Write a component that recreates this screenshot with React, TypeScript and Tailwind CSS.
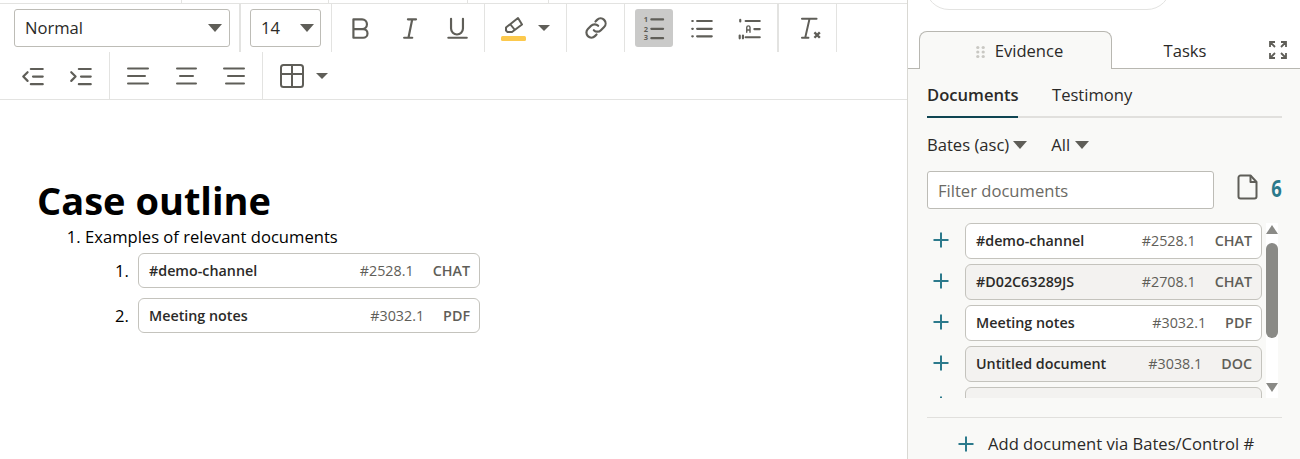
import { ReactNode } from "react";

const docs = [
  { name: "#demo-channel", bates: "#2528.1", kind: "CHAT" },
  { name: "#D02C63289JS", bates: "#2708.1", kind: "CHAT" },
  { name: "Meeting notes", bates: "#3032.1", kind: "PDF" },
  { name: "Untitled document", bates: "#3038.1", kind: "DOC" },
  { name: "", bates: "", kind: "" },
];

function Icon({ children, size = 26, className = "" }: { children: ReactNode; size?: number; className?: string }) {
  return (
    <svg
      width={size}
      height={size}
      viewBox="0 0 24 24"
      fill="none"
      stroke="#5f5e58"
      strokeWidth="2"
      strokeLinecap="round"
      strokeLinejoin="round"
      className={className}
    >
      {children}
    </svg>
  );
}

function Caret({ className = "" }: { className?: string }) {
  return <span className={`inline-block w-0 h-0 border-x-[7px] border-x-transparent border-t-[8px] border-t-[#5f5e58] ${className}`} />;
}

function SmallCaret() {
  return <span className="inline-block w-0 h-0 border-x-[6px] border-x-transparent border-t-[6px] border-t-[#5f5e58]" />;
}

function ToolBtn({ children, active }: { children: ReactNode; active?: boolean }) {
  return (
    <div className="w-[48px] h-[47px] flex items-center justify-center">
      <div className={`w-[38px] h-[38px] rounded-[3px] flex items-center justify-center ${active ? "bg-[#cacac9]" : ""}`}>{children}</div>
    </div>
  );
}

function Group({ children, className = "" }: { children: ReactNode; className?: string }) {
  return <div className={`flex items-center border-r border-[#e3e3e1] h-full ${className}`}>{children}</div>;
}

function DocCard({ name, bates, kind, shaded, height = "h-[36px]" }: { name: string; bates: string; kind: string; shaded?: boolean; height?: string }) {
  return (
    <div className={`flex items-center shrink-0 rounded-[6px] border border-[#c4c3bd] pl-[10px] pr-[9px] text-[14.3px] ${height} ${shaded ? "bg-[#f3f2f0]" : "bg-white"}`}>
      <span className="font-semibold text-[#2b2a28] flex-1">{name}</span>
      <span className="text-[#5f5e58] mr-[19px]">{bates}</span>
      <span className="font-semibold text-[#5f5e58]">{kind}</span>
    </div>
  );
}

function Toolbar() {
  return (
    <div className="border-b border-[#e3e3e1] h-[96px] shrink-0">
      <div className="flex h-[48px]">
        <Group className="w-[241px] pl-[14px] border-r-2">
          <div className="w-[216px] h-[38px] rounded-[3px] border border-[#bdbcb6] flex items-center justify-between pl-[10px] pr-[7px] text-[16.6px] text-[#2b2a28]">
            Normal
            <Caret />
          </div>
        </Group>
        <Group className="w-[91px] pl-[9px]">
          <div className="w-[71px] h-[38px] rounded-[3px] border border-[#bdbcb6] flex items-center justify-between pl-[10px] pr-[6px] text-[16.6px] text-[#2b2a28]">
            14
            <Caret />
          </div>
        </Group>
        <Group className="w-[153px] pl-[5px]">
          <ToolBtn>
            <Icon><path d="M5 4h8a4.500 4.500 0 0 1 0 9H5zM5 13h9a4 4 0 0 1 0 8H5z" /></Icon>
          </ToolBtn>
          <ToolBtn>
            <Icon><path d="M11 4h7.500M7.500 21H15M15 4l-3.500 17" /></Icon>
          </ToolBtn>
          <ToolBtn>
            <Icon><path d="M6.500 3.500v9a5.500 5.500 0 0 0 11 0v-9M4 21h17" /></Icon>
          </ToolBtn>
        </Group>
        <Group className="w-[82px] pl-[5px]">
          <ToolBtn>
            <svg width="26" height="26" viewBox="0 0 26 26" fill="none" stroke="#5f5e58" strokeWidth="2" strokeLinejoin="round">
              <path d="M5 12.500L17 3l4 6.500-10 7.500H6.500L5 15.500z" />
              <path d="M9.500 9.500l4 5" />
              <rect x="0" y="21" width="25" height="5" rx="1.500" fill="#fcc94d" stroke="none" />
            </svg>
          </ToolBtn>
          <SmallCaret />
        </Group>
        <Group className="w-[58px] pl-[5px]">
          <ToolBtn>
            <Icon>
              <path d="M10 14a4.500 4.500 0 0 0 6.500 0l3-3a4.500 4.500 0 0 0-6.500-6.500l-1.500 1.500" />
              <path d="M14 10a4.500 4.500 0 0 0-6.500 0l-3 3a4.500 4.500 0 0 0 6.500 6.500l1.500-1.500" />
            </Icon>
          </ToolBtn>
        </Group>
        <Group className="w-[154px] pl-[5px] border-r-2">
          <ToolBtn active>
            <svg width="26" height="30" viewBox="0 -2 24 28" fill="none" stroke="#5f5e58" strokeWidth="2" strokeLinecap="round">
              <path d="M9.500 4h11M9.500 12.800h11M9.500 21.500h11" />
              <g fill="#5f5e58" stroke="none" fontSize="7" fontWeight="700" textAnchor="middle">
                <text x="4.500" y="6.500">1</text>
                <text x="4.500" y="15.300">2</text>
                <text x="4.500" y="23.500">3</text>
              </g>
            </svg>
          </ToolBtn>
          <ToolBtn>
            <Icon>
              <path d="M7.500 5.500h13.500M7.500 12.800h13.500M7.500 19.700h13.500M3 5.500h.5M3 12.800h.5M3 19.700h.5" />
            </Icon>
          </ToolBtn>
          <ToolBtn>
            <Icon>
              <path d="M8 5.500h13M16 13h5M8 20.500h13M3 4.500v1.500M2.500 19v2.500M5.500 19v2.500" />
              <path d="M9 16v-4.500a1.500 1.500 0 0 1 3 0V16M9 13.800h3" strokeWidth="1.300" />
            </Icon>
          </ToolBtn>
        </Group>
        <Group className="w-[58px] pl-[6px]">
          <ToolBtn>
            <Icon>
              <path d="M5.500 3.500h13.500M12.500 3.500l-4 17.500M5.500 21h6" strokeWidth="1.800" />
              <path d="M17 16l5 5M22 16l-5 5" strokeWidth="2.200" strokeLinecap="butt" />
            </Icon>
          </ToolBtn>
        </Group>
      </div>
      <div className="flex h-[48px]">
        <Group className="w-[110px] pl-[9px]">
          <ToolBtn>
            <Icon><path d="M7 8.500L3 12.500l4 4M10 5.500h11M12 12.500h9M10 19.500h11" /></Icon>
          </ToolBtn>
          <ToolBtn>
            <Icon><path d="M3 8.500l4 4-4 4M10 5.500h11M12 12.500h9M10 19.500h11" /></Icon>
          </ToolBtn>
        </Group>
        <Group className="w-[153px] pl-[4px]">
          <ToolBtn>
            <Icon size={24}><path d="M2 4.500h20M2 12h17M2 19.500h20" /></Icon>
          </ToolBtn>
          <ToolBtn>
            <Icon size={24}><path d="M3 4.500h19M6 12h13M3 19.500h19" /></Icon>
          </ToolBtn>
          <ToolBtn>
            <Icon size={24}><path d="M2 4.500h20M6 12h16M4 19.500h18" /></Icon>
          </ToolBtn>
        </Group>
        <div className="flex items-center pl-[5px]">
          <ToolBtn>
            <svg width="26" height="26" viewBox="0 0 26 26" fill="none" stroke="#5f5e58" strokeWidth="2" strokeLinejoin="round">
              <rect x="2" y="2" width="22" height="22" rx="2.500" />
              <path d="M2 11h22M13 2v22" />
            </svg>
          </ToolBtn>
          <SmallCaret />
        </div>
      </div>
    </div>
  );
}

function Editor() {
  return (
    <div className="flex-1 min-w-0 flex flex-col bg-white">
      <div className="h-[4px] border-b border-[#e3e3e1] shrink-0 flex">
        <div className="w-[182px] h-full border-r border-[#e3e3e1]" />
        <div className="w-[147px] h-full border-r border-[#e3e3e1]" />
        <div className="w-[139px] h-full border-r border-[#e3e3e1]" />
        <div className="w-[81px] h-full border-r border-[#e3e3e1]" />
      </div>
      <Toolbar />
      <div className="pl-[37px] pt-[77px] text-black">
        <h1 className="text-[38px] leading-[46px] font-bold">Case outline</h1>
        <ol className="list-decimal pl-[48px] text-[16.6px] leading-[22px] mt-[3px]">
          <li>
            Examples of relevant documents
            <ol className="pl-[30px] mt-[5px] flex flex-col gap-[10px]">
              <li className="flex items-center">
                <span className="w-[23px]">1.</span>
                <div className="w-[342px]"><DocCard name="#demo-channel" bates="#2528.1" kind="CHAT" height="h-[35px]" /></div>
              </li>
              <li className="flex items-center">
                <span className="w-[23px]">2.</span>
                <div className="w-[342px]"><DocCard name="Meeting notes" bates="#3032.1" kind="PDF" height="h-[35px]" /></div>
              </li>
            </ol>
          </li>
        </ol>
      </div>
    </div>
  );
}

function Plus({ size = 18 }: { size?: number }) {
  return (
    <svg width={size} height={size} viewBox="0 0 18 18" fill="none" stroke="#2c7a8c" strokeWidth="2">
      <path d="M9 1.500v15M1.500 9h15" />
    </svg>
  );
}

function Panel() {
  return (
    <div className="w-[393px] shrink-0 border-l border-[#d9d8d3] flex flex-col bg-white text-[#2b2a28]">
      <div className="h-[40px] mt-[-30px] ml-[17px] w-[246px] rounded-b-[24px] border border-[#e3e3e1] shrink-0" />
      <div className="flex items-end h-[48px] mt-[11px] pl-[11px] shrink-0 border-b border-[#b8b7b1] relative">
        <div className="w-[193px] h-[38px] mb-[-1px] pl-[8px] pt-[2px] rounded-t-[8px] border border-b-0 border-[#b8b7b1] bg-[#f9f9f7] flex items-center justify-center text-[16.6px]">
          <svg width="9" height="14" viewBox="0 0 10 14" className="mr-[10px]" fill="#c9c8c3">
            <circle cx="2" cy="2" r="1.800" />
            <circle cx="8" cy="2" r="1.800" />
            <circle cx="2" cy="7" r="1.800" />
            <circle cx="8" cy="7" r="1.800" />
            <circle cx="2" cy="12" r="1.800" />
            <circle cx="8" cy="12" r="1.800" />
          </svg>
          Evidence
        </div>
        <div className="w-[146px] h-[37px] pt-[4px] flex items-center justify-center text-[16.6px]">Tasks</div>
        <div className="h-[37px] flex items-center ml-[10px]">
          <svg width="20" height="20" viewBox="0 0 20 20" fill="none" stroke="#5f5e58" strokeWidth="1.800">
            <path d="M2 7V2h5M2 2l5 5M13 2h5v5M18 2l-5 5M2 13v5h5M2 18l5-5M18 13v5h-5M18 18l-5-5" />
          </svg>
        </div>
      </div>
      <div className="flex-1 min-h-0 bg-[#f9f9f7] px-[19px]">
        <div className="flex w-[355px] h-[49px] border-b-2 border-[#e1e0dd] text-[16.6px]">
          <div className="w-[91px] h-[49px] border-b-2 border-[#0f4552] font-semibold flex items-center pt-[6px]">Documents</div>
          <div className="ml-[34px] h-[47px] flex items-center pt-[5px]">Testimony</div>
        </div>
        <div className="flex items-center h-[26px] mt-[14px] text-[16.6px]">
          <span>Bates (asc)</span>
          <Caret className="ml-[4px]" />
          <span className="ml-[24px]">All</span>
          <Caret className="ml-[5px]" />
        </div>
        <div className="flex items-center mt-[13px]">
          <div className="w-[287px] h-[38px] shrink-0 bg-white rounded-[3px] border border-[#bdbcb6] flex items-center pl-[10px] pt-[2px] text-[16.6px] text-[#6b6a64]">Filter documents</div>
          <svg width="22" height="26" viewBox="0 0 22 26" fill="none" stroke="#5f5e58" strokeWidth="2" strokeLinejoin="round" className="ml-[23px] mb-[6px] shrink-0">
            <path d="M3.500 1.500h10l6 6.500v14.500a2 2 0 0 1-2 2h-14a2 2 0 0 1-2-2V3.500a2 2 0 0 1 2-2z" />
            <path d="M13.500 1.500V8h6" />
          </svg>
          <span className="ml-[11px] text-[23px] leading-[30px] font-bold text-[#2c7a8c] inline-block scale-x-[0.8] mb-[5px]">6</span>
        </div>
        <div className="flex mt-[14px] h-[175px]">
          <div className="w-[335px] h-full overflow-hidden flex flex-col gap-[5px]">
            {docs.map((d, i) => (
              <div key={i} className="flex items-center shrink-0">
                <div className="w-[38px] flex justify-start pl-[5px] pb-[2px]"><Plus /></div>
                <div className="w-[297px]"><DocCard name={d.name} bates={d.bates} kind={d.kind} shaded={i % 2 === 1 || i === 4} /></div>
              </div>
            ))}
          </div>
          <div className="w-[12px] ml-[4px] h-full flex flex-col items-center bg-white">
            <span className="mt-[2px] w-0 h-0 border-x-[6px] border-x-transparent border-b-[9px] border-b-[#8a8a86]" />
            <div className="w-[12px] h-[95px] mt-[9px] rounded-[6px] bg-[#8a8a86]" />
            <span className="mt-[45px] w-0 h-0 border-x-[6px] border-x-transparent border-t-[9px] border-t-[#8a8a86]" />
          </div>
        </div>
        <div className="w-[355px] mt-[19px] border-t border-[#e1e0dd] flex items-center pl-[30px] pt-[14px] text-[16.6px]">
          <Plus />
          <span className="ml-[13px]">Add document via Bates/Control #</span>
        </div>
      </div>
    </div>
  );
}

export default function App() {
  return (
    <div className="flex h-[459px] w-[1300px] overflow-hidden bg-white font-['Open_Sans',sans-serif]">
      <Editor />
      <Panel />
    </div>
  );
}
